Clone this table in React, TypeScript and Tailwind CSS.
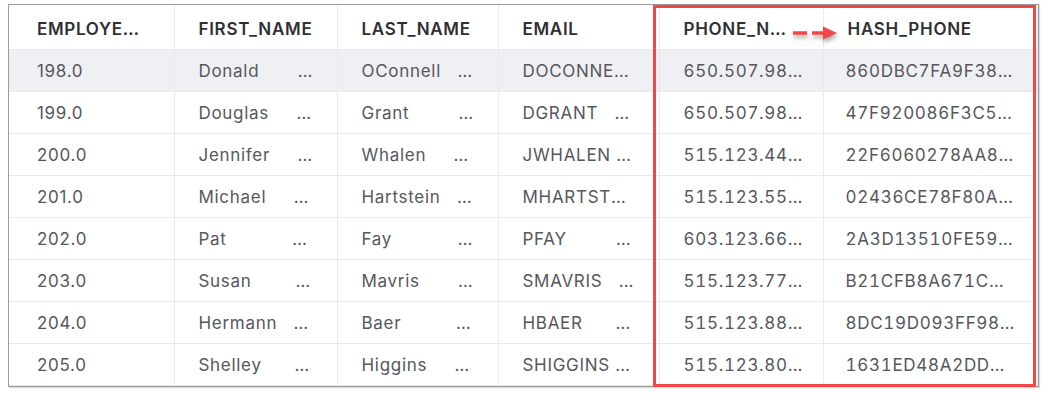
import React from 'react'

type Row = {
  id: string
  first: string
  last: string
  email: string
  phone: string
  hash: string
}

const pad = (s: string, n: number) => s + ' '.repeat(Math.max(0, n - s.length))

const rows: Row[] = [
  { id: '198.0', first: 'Donald', last: 'OConnell', email: 'DOCONNEL', phone: '650.507.9833', hash: '860DBC7FA9F38E1B4C6D' },
  { id: '199.0', first: 'Douglas', last: 'Grant', email: 'DGRANT', phone: '650.507.9844', hash: '47F920086F3C5A2E91B0' },
  { id: '200.0', first: 'Jennifer', last: 'Whalen', email: 'JWHALEN', phone: '515.123.4444', hash: '22F6060278AA8D3C17E5' },
  { id: '201.0', first: 'Michael', last: 'Hartstein', email: 'MHARTSTE', phone: '515.123.5555', hash: '02436CE78F80A9B1D244' },
  { id: '202.0', first: 'Pat', last: 'Fay', email: 'PFAY', phone: '603.123.6666', hash: '2A3D13510FE59C07B8A1' },
  { id: '203.0', first: 'Susan', last: 'Mavris', email: 'SMAVRIS', phone: '515.123.7777', hash: 'B21CFB8A671C7E4D0F93' },
  { id: '204.0', first: 'Hermann', last: 'Baer', email: 'HBAER', phone: '515.123.8888', hash: '8DC19D093FF98A6B2C15' },
  { id: '205.0', first: 'Shelley', last: 'Higgins', email: 'SHIGGINS', phone: '515.123.8080', hash: '1631ED48A2DD7F05C9E8' },
]

const headers = ['EMPLOYEE_ID', 'FIRST_NAME', 'LAST_NAME', 'EMAIL', 'PHONE_NUMBER', 'HASH_PHONE']

function Cell({ children, className = 'pl-[24px] pr-[24px]' }: { children: React.ReactNode; className?: string }) {
  return (
    <td
      className={`h-[42px] pt-[4px] pb-0 border-b border-r border-[#e9eaee] overflow-hidden text-ellipsis whitespace-pre ${className}`}
    >
      {children}
    </td>
  )
}

export default function App() {
  return (
    <div
      className="w-[1057px] h-[403px] bg-white pt-[4px] pl-[8px]"
      style={{ fontFamily: 'Inter, "Open Sans", sans-serif' }}
    >
      <div className="relative w-[1031px] border border-[#9c9c9c] shadow-[1px_1px_1px_rgba(0,0,0,0.15)]">
        <table className="table-fixed border-collapse w-full text-[17px] tracking-[0.7px]">
          <colgroup>
            <col className="w-[165px]" />
            <col className="w-[163px]" />
            <col className="w-[161px]" />
            <col className="w-[161px]" />
            <col className="w-[164px]" />
            <col />
          </colgroup>
          <thead>
            <tr className="h-[44px]">
              {headers.map((h, i) => (
                <th
                  key={h}
                  className={`border-b border-r border-[#e9eaee] ${i === 0 ? 'pl-[28px]' : 'pl-[24px]'} pr-[24px] pt-[6px] text-left font-semibold text-[#2f2f33] overflow-hidden text-ellipsis whitespace-nowrap`}
                >
                  {h}
                </th>
              ))}
            </tr>
          </thead>
          <tbody className="text-[#57575c]">
            {rows.map((r, i) => (
              <tr key={r.id} className={i === 0 ? 'bg-[#eff0f3]' : 'bg-white'}>
                <Cell className="pl-[28px] pr-[24px]">{r.id}</Cell>
                <Cell>{pad(r.first, 32)}</Cell>
                <Cell>{pad(r.last, 32)}</Cell>
                <Cell>{pad(r.email, 32)}</Cell>
                <Cell className="pl-[24px] pr-[15px] tabular-nums">{r.phone}</Cell>
                <Cell className="pl-[22px] pr-[22px] tabular-nums">{r.hash}</Cell>
              </tr>
            ))}
          </tbody>
        </table>

        {/* highlight box around phone columns */}
        <div className="absolute left-[644px] top-[0px] w-[383px] bottom-[-1px] border-[3px] border-[#f2474a] pointer-events-none" />

        {/* dashed arrow */}
        <svg
          className="absolute left-[782px] top-[18px] pointer-events-none"
          width="50"
          height="22"
          viewBox="0 0 50 22"
          style={{ filter: 'drop-shadow(1px 3px 2px rgba(0,0,0,0.35))' }}
        >
          <line x1="2" y1="10" x2="16" y2="10" stroke="#f2474a" strokeWidth="3.5" />
          <line x1="21" y1="10" x2="33" y2="10" stroke="#f2474a" strokeWidth="3.5" />
          <path d="M32 3.5 L46 10 L32 16.5 Z" fill="#f2474a" />
        </svg>
      </div>
    </div>
  )
}
